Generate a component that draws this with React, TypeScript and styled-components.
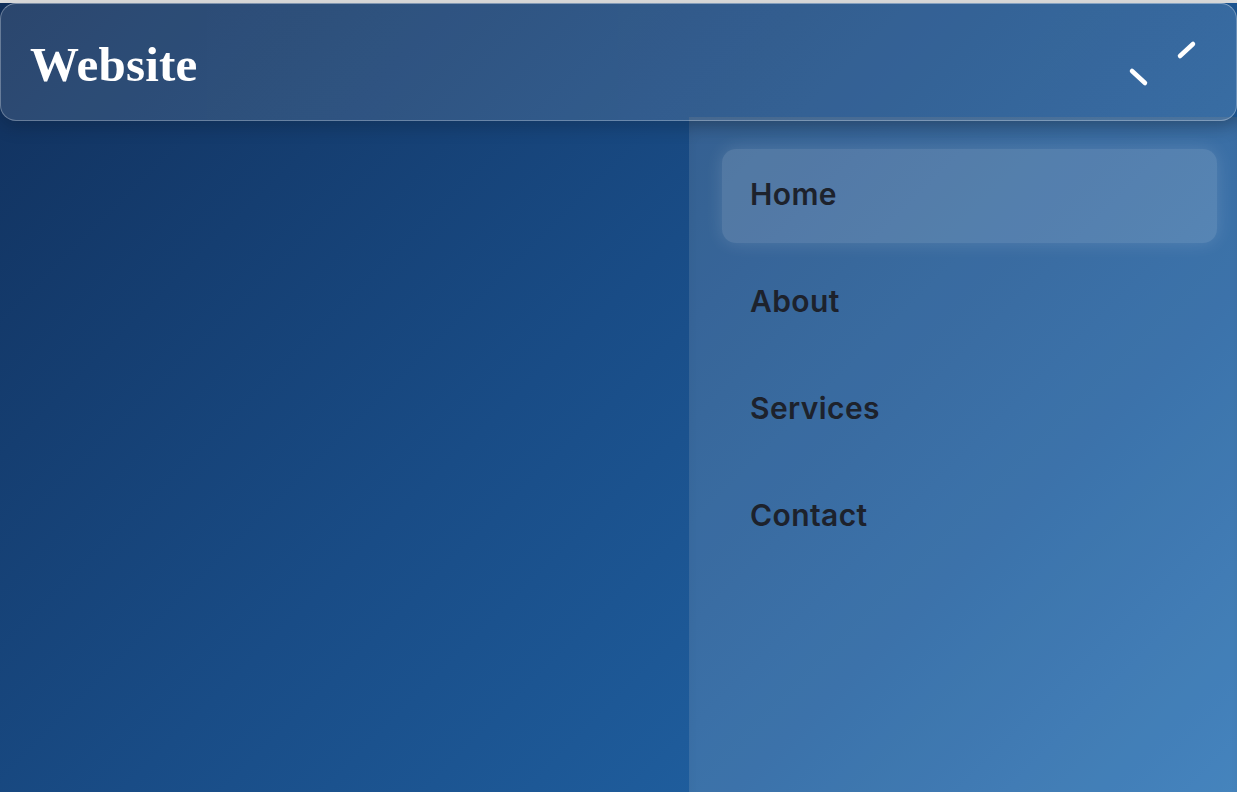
import styled, { createGlobalStyle } from 'styled-components';

const GlobalStyle = createGlobalStyle`
  * {
    box-sizing: border-box;
  }

  html,
  body {
    margin: 0;
    padding: 0;
    background: #dedede;
    overflow: hidden;
  }
`;

const Page = styled.div`
  margin-top: 3px;
  height: 789px;
  display: flex;
  flex-direction: column;
  background: linear-gradient(135deg, #11305c 0%, #194c86 45%, #1f5e9e 75%, #2a72b4 100%);
  font-family: 'Inter', 'Open Sans', sans-serif;
`;

const Header = styled.header`
  position: relative;
  z-index: 2;
  height: 118px;
  flex-shrink: 0;
  display: flex;
  align-items: center;
  justify-content: space-between;
  padding: 0 38px 0 29px;
  background: linear-gradient(90deg, rgba(255, 255, 255, 0.11), rgba(255, 255, 255, 0.12));
  border: 1px solid rgba(255, 255, 255, 0.28);
  border-top-color: rgba(255, 255, 255, 0.4);
  border-radius: 16px;
  box-shadow: 0 6px 18px rgba(0, 0, 0, 0.18);
`;

const Logo = styled.h1`
  margin: 5px 0 0;
  font-family: 'Liberation Serif', 'DejaVu Serif', serif;
  font-weight: 700;
  font-size: 49px;
  letter-spacing: 0.2px;
  color: #ffffff;
`;

const MenuButton = styled.button`
  border: 0;
  padding: 0;
  background: none;
  display: flex;
  margin-top: 3px;
  cursor: pointer;
`;

const Body = styled.div`
  flex: 1;
  display: flex;
  margin-top: -4px;
`;

const Spacer = styled.div`
  flex: 1;
`;

const Panel = styled.nav`
  width: 548px;
  display: flex;
  flex-direction: column;
  gap: 13px;
  padding: 32px 20px 0 33px;
  background: rgba(255, 255, 255, 0.13);
  box-shadow: inset 0 14px 18px -10px rgba(0, 0, 0, 0.18);
`;

const Item = styled.a<{ $active?: boolean }>`
  height: 94px;
  display: flex;
  align-items: center;
  padding: 0 0 4px 28px;
  border-radius: 14px;
  font-size: 30px;
  font-weight: 600;
  letter-spacing: 0.4px;
  color: #1d222c;
  text-decoration: none;
  background: ${(p) => (p.$active ? 'rgba(255, 255, 255, 0.14)' : 'transparent')};
  box-shadow: ${(p) => (p.$active ? '0 0 18px rgba(255, 255, 255, 0.14)' : 'none')};
`;

const links = ['Home', 'About', 'Services', 'Contact'];

const App = () => {
  return (
    <>
      <GlobalStyle />
      <Page>
        <Header>
          <Logo>Website</Logo>
          <MenuButton aria-label='Menu'>
            <svg width='72' height='52' viewBox='0 0 72 52'>
              <g stroke='#ffffff' strokeWidth='4.5' strokeLinecap='round'>
                <line x1='6' y1='33' x2='19' y2='45' />
                <line x1='54' y1='18' x2='67' y2='6' />
              </g>
            </svg>
          </MenuButton>
        </Header>
        <Body>
          <Spacer />
          <Panel>
            {links.map((link, i) => (
              <Item key={link} href='#' $active={i === 0}>
                {link}
              </Item>
            ))}
          </Panel>
        </Body>
      </Page>
    </>
  );
};

export default App;
